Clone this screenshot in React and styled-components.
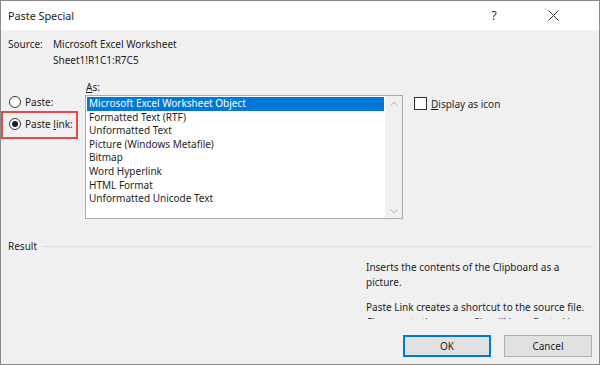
import React from 'react';
import styled, { createGlobalStyle } from 'styled-components';

const Global = createGlobalStyle`
  html, body { margin: 0; padding: 0; background: #ffffff; }
  body { font-family: "Noto Sans", "Open Sans", sans-serif; }
`;

const Window = styled.div`
  box-sizing: border-box;
  width: 600px;
  height: 365px;
  border: 1px solid #8a8a8a;
  background: #f0f0f0;
  display: flex;
  flex-direction: column;
  font-family: "Noto Sans", "Open Sans", sans-serif;
  font-size: 10px;
  color: #1e1e1e;
  overflow: hidden;
`;

const TitleBar = styled.div`
  height: 29px;
  flex: none;
  background: #ffffff;
  display: flex;
  align-items: center;
  padding-left: 7px;
  padding-right: 31px;
`;

const Title = styled.div`
  flex: 1;
  font-size: 10.8px;
  color: #1a1a1a;
`;

const TitleButton = styled.div`
  width: 30px;
  height: 29px;
  display: flex;
  align-items: center;
  justify-content: center;
  font-size: 12px;
  color: #333;
  margin-left: ${p => p.$gap || 0}px;
`;

const Content = styled.div`
  flex: 1;
  display: flex;
  flex-direction: column;
  padding: 7px 7px 7px 7px;
  min-height: 0;
`;

const SourceGrid = styled.div`
  display: grid;
  grid-template-columns: 45px auto;
  line-height: 15.5px;
`;

const MainRow = styled.div`
  display: flex;
  margin-top: 12px;
`;

const LeftCol = styled.div`
  width: 77px;
  padding-top: 15px;
  display: flex;
  flex-direction: column;
  gap: 8px;
`;

const RadioRow = styled.label`
  position: relative;
  display: flex;
  align-items: center;
  height: 14px;
  gap: 4px;
  padding-left: 1px;
  ${p => p.$highlight && `
    &::before {
      content: "";
      position: absolute;
      left: -7px;
      top: -6px;
      width: 77px;
      height: 28px;
      box-sizing: border-box;
      border: 2px solid #e8474b;
    }
  `}
`;

const RadioCircle = styled.span`
  box-sizing: border-box;
  width: 12px;
  height: 12px;
  border-radius: 50%;
  border: 1px solid #333;
  background: #fff;
  display: flex;
  align-items: center;
  justify-content: center;
  &::after {
    content: "";
    display: ${p => (p.$checked ? 'block' : 'none')};
    width: 6px;
    height: 6px;
    border-radius: 50%;
    background: #1c1c2c;
  }
`;

const U = styled.span`
  text-decoration: underline;
  text-underline-offset: 1px;
`;

const CenterCol = styled.div`
  width: 318px;
  display: flex;
  flex-direction: column;
`;

const Label = styled.div`
  height: 15px;
  line-height: 14px;
  padding-left: 1px;
`;

const ListBox = styled.div`
  box-sizing: border-box;
  height: 124px;
  border: 1px solid #ababab;
  background: #fff;
  display: flex;
`;

const Items = styled.div`
  flex: 1;
  padding: 1px;
`;

const Item = styled.div`
  height: 13.6px;
  line-height: 13.6px;
  padding-left: 2px;
  white-space: nowrap;
  background: ${p => (p.$selected ? '#0078d7' : 'transparent')};
  color: ${p => (p.$selected ? '#ffffff' : '#1e1e1e')};
`;

const ScrollBar = styled.div`
  width: 17px;
  background: #f0f0f0;
  display: flex;
  flex-direction: column;
  justify-content: space-between;
  align-items: center;
  padding: 5px 0 4px;
`;

const RightCol = styled.div`
  margin-left: 11px;
  padding-top: 17px;
`;

const CheckRow = styled.label`
  display: flex;
  align-items: center;
  gap: 4px;
  height: 13px;
`;

const CheckBox = styled.span`
  box-sizing: border-box;
  width: 13px;
  height: 13px;
  border: 1px solid #333;
  background: #fff;
`;

const ResultRow = styled.div`
  display: flex;
  align-items: center;
  margin-top: 20px;
  line-height: 14px;
  height: 14px;
`;

const ResultLine = styled.div`
  flex: 1;
  height: 1px;
  background: #dcdcdc;
  margin-left: 5px;
  margin-right: -1px;
`;

const Description = styled.div`
  margin-left: 358px;
  margin-top: 7px;
  width: 222px;
  height: 59px;
  overflow: hidden;
  line-height: 15px;
`;

const Para = styled.p`
  margin: 0 0 10px 0;
  &:last-child { margin-bottom: 0; }
`;

const ButtonRow = styled.div`
  margin-top: auto;
  display: flex;
  justify-content: flex-end;
  gap: 13px;
`;

const Button = styled.button`
  box-sizing: border-box;
  width: 88px;
  height: 22px;
  font-family: "Noto Sans", "Open Sans", sans-serif;
  font-size: 10px;
  color: #1e1e1e;
  background: #e1e1e1;
  border: 1px solid ${p => (p.$default ? '#0078d7' : '#adadad')};
  box-shadow: ${p => (p.$default ? 'inset 0 0 0 1px #0078d7' : 'none')};
  padding: 0;
`;

const Chevron = ({ up }) => (
  <svg width="8" height="5" viewBox="0 0 8 5">
    <polyline
      points={up ? '0.5,4.5 4,1 7.5,4.5' : '0.5,0.5 4,4 7.5,0.5'}
      fill="none"
      stroke="#b4b4b4"
      strokeWidth="1"
    />
  </svg>
);

const CloseIcon = () => (
  <svg width="11" height="11" viewBox="0 0 11 11">
    <path d="M0.5 0.5 L10.5 10.5 M10.5 0.5 L0.5 10.5" stroke="#333" strokeWidth="1" fill="none" />
  </svg>
);

const items = [
  'Microsoft Excel Worksheet Object',
  'Formatted Text (RTF)',
  'Unformatted Text',
  'Picture (Windows Metafile)',
  'Bitmap',
  'Word Hyperlink',
  'HTML Format',
  'Unformatted Unicode Text',
];

export default function App() {
  return (
    <>
      <Global />
      <Window>
        <TitleBar>
          <Title>Paste Special</Title>
          <TitleButton>?</TitleButton>
          <TitleButton $gap={29}>
            <CloseIcon />
          </TitleButton>
        </TitleBar>
        <Content>
          <SourceGrid>
            <span>Source:</span>
            <span>Microsoft Excel Worksheet</span>
            <span />
            <span>Sheet1!R1C1:R7C5</span>
          </SourceGrid>
          <MainRow>
            <LeftCol>
              <RadioRow>
                <RadioCircle />
                <span>Paste:</span>
              </RadioRow>
              <RadioRow $highlight>
                <RadioCircle $checked />
                <span>
                  Paste <U>l</U>ink:
                </span>
              </RadioRow>
            </LeftCol>
            <CenterCol>
              <Label>
                <U>A</U>s:
              </Label>
              <ListBox>
                <Items>
                  {items.map((t, i) => (
                    <Item key={t} $selected={i === 0}>
                      {t}
                    </Item>
                  ))}
                </Items>
                <ScrollBar>
                  <Chevron up />
                  <Chevron />
                </ScrollBar>
              </ListBox>
            </CenterCol>
            <RightCol>
              <CheckRow>
                <CheckBox />
                <span>
                  <U>D</U>isplay as icon
                </span>
              </CheckRow>
            </RightCol>
          </MainRow>
          <ResultRow>
            <span>Result</span>
            <ResultLine />
          </ResultRow>
          <Description>
            <Para>Inserts the contents of the Clipboard as a picture.</Para>
            <Para>
              Paste Link creates a shortcut to the source file. Changes to the source file will be
              reflected in
            </Para>
          </Description>
          <ButtonRow>
            <Button $default>OK</Button>
            <Button>Cancel</Button>
          </ButtonRow>
        </Content>
      </Window>
    </>
  );
}
